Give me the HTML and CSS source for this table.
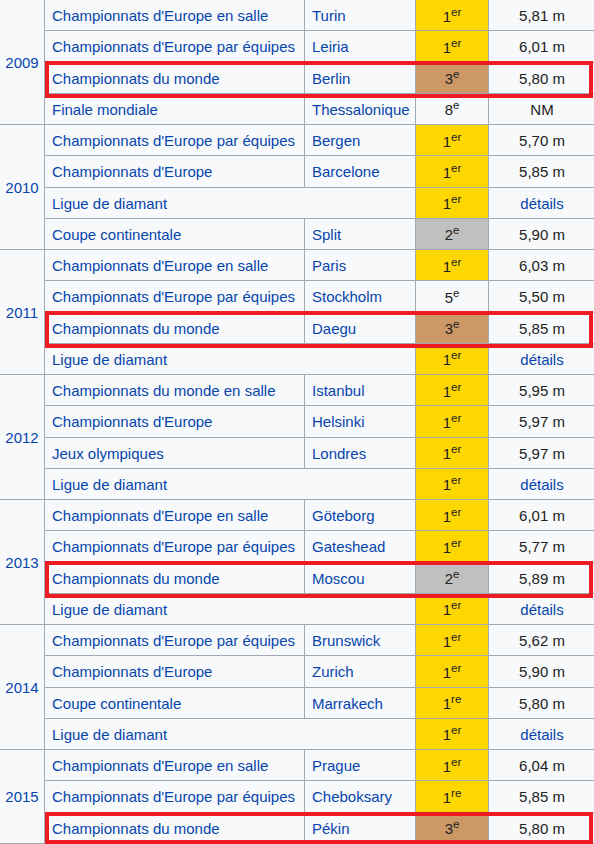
FILE: index.html
```html
<!DOCTYPE html>
<html lang="fr">
<head>
<meta charset="utf-8">
<title>Palmarès</title>
<link rel="stylesheet" href="styles.css">
</head>
<body>
<div class="wrap">
<table class="results">
<colgroup>
<col class="c-year"><col class="c-comp"><col class="c-city"><col class="c-place"><col class="c-perf">
</colgroup>
<tbody>
<tr><td class="year" rowspan="4"><a>2009</a></td><td><a>Championnats d'Europe en salle</a></td><td><a>Turin</a></td><td class="pl gold">1<sup>er</sup></td><td class="pf">5,81 m</td></tr>
<tr><td><a>Championnats d'Europe par équipes</a></td><td><a>Leiria</a></td><td class="pl gold">1<sup>er</sup></td><td class="pf">6,01 m</td></tr>
<tr><td><a>Championnats du monde</a></td><td><a>Berlin</a></td><td class="pl bronze">3<sup>e</sup></td><td class="pf">5,80 m</td></tr>
<tr><td><a>Finale mondiale</a></td><td><a>Thessalonique</a></td><td class="pl">8<sup>e</sup></td><td class="pf">NM</td></tr>

<tr><td class="year" rowspan="4"><a>2010</a></td><td><a>Championnats d'Europe par équipes</a></td><td><a>Bergen</a></td><td class="pl gold">1<sup>er</sup></td><td class="pf">5,70 m</td></tr>
<tr><td><a>Championnats d'Europe</a></td><td><a>Barcelone</a></td><td class="pl gold">1<sup>er</sup></td><td class="pf">5,85 m</td></tr>
<tr><td colspan="2"><a>Ligue de diamant</a></td><td class="pl gold">1<sup>er</sup></td><td class="pf"><a>détails</a></td></tr>
<tr><td><a>Coupe continentale</a></td><td><a>Split</a></td><td class="pl silver">2<sup>e</sup></td><td class="pf">5,90 m</td></tr>

<tr><td class="year" rowspan="4"><a>2011</a></td><td><a>Championnats d'Europe en salle</a></td><td><a>Paris</a></td><td class="pl gold">1<sup>er</sup></td><td class="pf">6,03 m</td></tr>
<tr><td><a>Championnats d'Europe par équipes</a></td><td><a>Stockholm</a></td><td class="pl">5<sup>e</sup></td><td class="pf">5,50 m</td></tr>
<tr><td><a>Championnats du monde</a></td><td><a>Daegu</a></td><td class="pl bronze">3<sup>e</sup></td><td class="pf">5,85 m</td></tr>
<tr><td colspan="2"><a>Ligue de diamant</a></td><td class="pl gold">1<sup>er</sup></td><td class="pf"><a>détails</a></td></tr>

<tr><td class="year" rowspan="4"><a>2012</a></td><td><a>Championnats du monde en salle</a></td><td><a>Istanbul</a></td><td class="pl gold">1<sup>er</sup></td><td class="pf">5,95 m</td></tr>
<tr><td><a>Championnats d'Europe</a></td><td><a>Helsinki</a></td><td class="pl gold">1<sup>er</sup></td><td class="pf">5,97 m</td></tr>
<tr><td><a>Jeux olympiques</a></td><td><a>Londres</a></td><td class="pl gold">1<sup>er</sup></td><td class="pf">5,97 m</td></tr>
<tr><td colspan="2"><a>Ligue de diamant</a></td><td class="pl gold">1<sup>er</sup></td><td class="pf"><a>détails</a></td></tr>

<tr><td class="year" rowspan="4"><a>2013</a></td><td><a>Championnats d'Europe en salle</a></td><td><a>Göteborg</a></td><td class="pl gold">1<sup>er</sup></td><td class="pf">6,01 m</td></tr>
<tr><td><a>Championnats d'Europe par équipes</a></td><td><a>Gateshead</a></td><td class="pl gold">1<sup>er</sup></td><td class="pf">5,77 m</td></tr>
<tr><td><a>Championnats du monde</a></td><td><a>Moscou</a></td><td class="pl silver">2<sup>e</sup></td><td class="pf">5,89 m</td></tr>
<tr><td colspan="2"><a>Ligue de diamant</a></td><td class="pl gold">1<sup>er</sup></td><td class="pf"><a>détails</a></td></tr>

<tr><td class="year" rowspan="4"><a>2014</a></td><td><a>Championnats d'Europe par équipes</a></td><td><a>Brunswick</a></td><td class="pl gold">1<sup>er</sup></td><td class="pf">5,62 m</td></tr>
<tr><td><a>Championnats d'Europe</a></td><td><a>Zurich</a></td><td class="pl gold">1<sup>er</sup></td><td class="pf">5,90 m</td></tr>
<tr><td><a>Coupe continentale</a></td><td><a>Marrakech</a></td><td class="pl gold">1<sup>re</sup></td><td class="pf">5,80 m</td></tr>
<tr><td colspan="2"><a>Ligue de diamant</a></td><td class="pl gold">1<sup>er</sup></td><td class="pf"><a>détails</a></td></tr>

<tr><td class="year" rowspan="3"><a>2015</a></td><td><a>Championnats d'Europe en salle</a></td><td><a>Prague</a></td><td class="pl gold">1<sup>er</sup></td><td class="pf">6,04 m</td></tr>
<tr><td><a>Championnats d'Europe par équipes</a></td><td><a>Cheboksary</a></td><td class="pl gold">1<sup>re</sup></td><td class="pf">5,85 m</td></tr>
<tr><td><a>Championnats du monde</a></td><td><a>Pékin</a></td><td class="pl bronze">3<sup>e</sup></td><td class="pf">5,80 m</td></tr>
</tbody>
</table>
<div class="hl hl-2009"></div>
<div class="hl hl-2011"></div>
<div class="hl hl-2013"></div>
<div class="hl hl-2015"></div>
</div>
</body>
</html>
```

FILE: styles.css
```css
html, body {
  margin: 0;
  padding: 0;
  background: #ffffff;
  overflow: hidden;
}

.wrap {
  position: relative;
  width: 594px;
  height: 844px;
  overflow: hidden;
}

.results {
  border-collapse: collapse;
  table-layout: fixed;
  width: 596px;
  margin: -1px 0 0 -1px;
  background: #f8f9fa;
  font-family: "Liberation Sans", Arial, sans-serif;
  font-size: 15px;
  color: #202122;
}

.c-year { width: 45px; }
.c-comp { width: 260px; }
.c-city { width: 111px; }
.c-place { width: 73px; }
.c-perf { width: 107px; }

.results td {
  border: 1px solid #a2a9b1;
  height: 31.25px;
  padding: 2px 7px 0;
  box-sizing: border-box;
  line-height: 18px;
  white-space: nowrap;
  overflow: hidden;
  vertical-align: middle;
}

.results a {
  color: #0645ad;
  text-decoration: none;
}

.results td.year {
  text-align: center;
  padding: 2px 0 0;
}

.results td.pl,
.results td.pf {
  text-align: center;
  padding: 2px 2px 0;
}

.results sup {
  font-size: 11.5px;
  line-height: 1;
  vertical-align: 6px;
}

.gold { background: #ffd700; }
.silver { background: #c0c0c0; }
.bronze { background: #cc9966; }

.hl {
  position: absolute;
  left: 45px;
  width: 548px;
  height: 37px;
  border: 4px solid #ed1c24;
  box-sizing: border-box;
  pointer-events: none;
}

.hl-2009 { top: 61px; }
.hl-2011 { top: 311px; }
.hl-2013 { top: 561px; }
.hl-2015 { top: 812px; height: 32px; }
```
